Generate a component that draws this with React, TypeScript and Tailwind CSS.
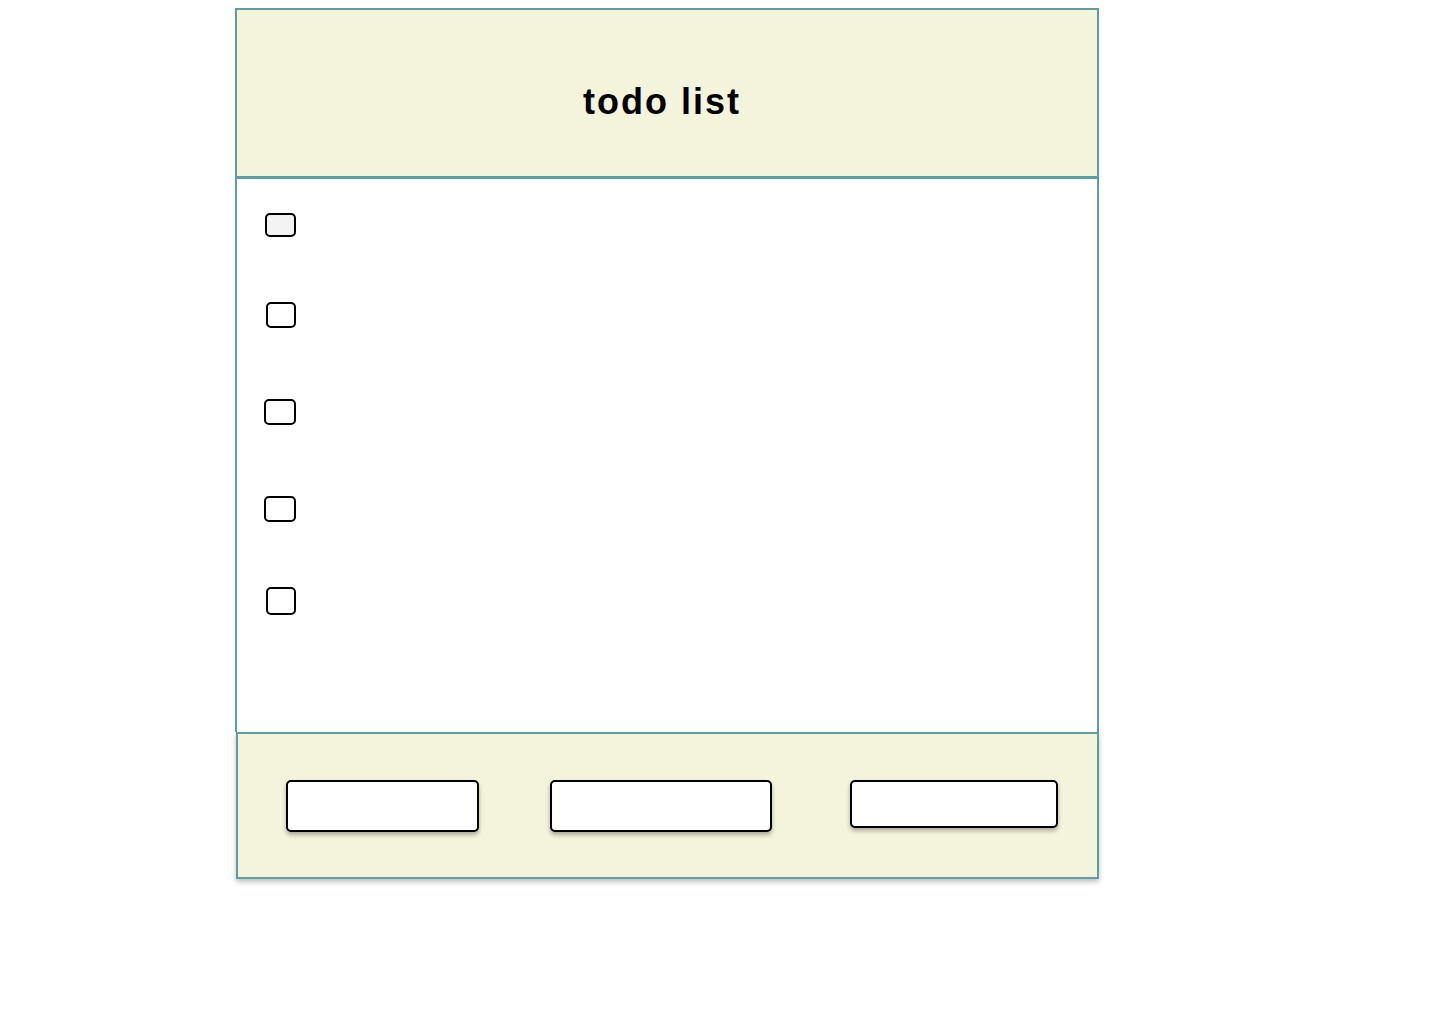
const rows = [
  { mt: 'mt-[34px]', ml: 'ml-[28px]', w: 'w-[31px]', h: 'h-[24px]', fill: 'bg-[#f3f3f3]' },
  { mt: 'mt-[65px]', ml: 'ml-[29px]', w: 'w-[30px]', h: 'h-[26px]', fill: 'bg-white' },
  { mt: 'mt-[71px]', ml: 'ml-[27px]', w: 'w-[32px]', h: 'h-[26px]', fill: 'bg-white' },
  { mt: 'mt-[71px]', ml: 'ml-[27px]', w: 'w-[32px]', h: 'h-[26px]', fill: 'bg-white' },
  { mt: 'mt-[65px]', ml: 'ml-[29px]', w: 'w-[30px]', h: 'h-[28px]', fill: 'bg-white' },
]

export default function App() {
  return (
    <div className="min-h-screen bg-white font-['Liberation_Sans',Arial,sans-serif]">
      <div className="ml-[235px] pt-[8px] w-[864px]">
        {/* header */}
        <header className="h-[171px] bg-[#f4f4dc] border-2 border-b-[3px] border-[#5f9ea0] flex items-center justify-center">
          <h1 className="pt-[18px] pr-[10px] text-[36px] font-bold tracking-[2px] text-black font-['Helvetica','Liberation_Sans',Arial,sans-serif]">
            todo list
          </h1>
        </header>

        {/* list */}
        <main className="h-[553px] bg-white border-x-2 border-[#5f9ea0] flex flex-col">
          {rows.map((r, i) => (
            <div key={i} className={`${r.mt} ${r.ml} flex items-center`}>
              <span
                className={`${r.w} ${r.h} ${r.fill} block rounded-[5px] border-2 border-black`}
              />
            </div>
          ))}
        </main>

        {/* footer */}
        <footer className="ml-px h-[147px] bg-[#f4f4dc] border-2 border-[#5f9ea0] shadow-[0_3px_5px_rgba(0,0,0,0.25)] flex items-start pt-[46px] pl-[48px]">
          <button
            type="button"
            className="w-[193px] h-[52px] bg-white border-2 border-black rounded-[5px] shadow-[0_3px_4px_rgba(0,0,0,0.3)]"
          />
          <button
            type="button"
            className="ml-[71px] w-[222px] h-[52px] bg-white border-2 border-black rounded-[5px] shadow-[0_3px_4px_rgba(0,0,0,0.3)]"
          />
          <button
            type="button"
            className="ml-[78px] w-[208px] h-[48px] bg-white border-2 border-black rounded-[5px] shadow-[0_3px_4px_rgba(0,0,0,0.3)]"
          />
        </footer>
      </div>
    </div>
  )
}
